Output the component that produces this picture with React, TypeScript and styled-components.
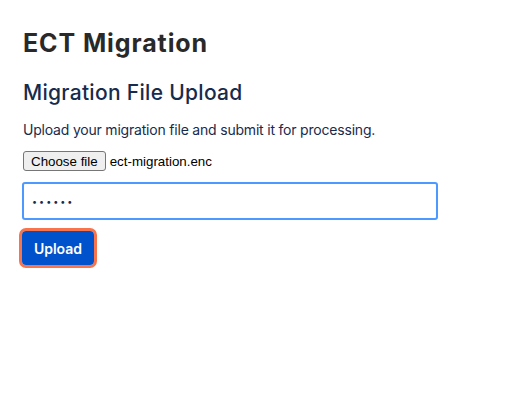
import React from "react";
import styled, { createGlobalStyle } from "styled-components";

const Global = createGlobalStyle`
  html, body { margin: 0; padding: 0; background: #ffffff; }
  body { font-family: Inter, "Noto Sans", sans-serif; }
`;

const Page = styled.main`
  padding: 28px 23px 0 23px;
  display: flex;
  flex-direction: column;
  align-items: flex-start;
`;

const Title = styled.h1`
  margin: 0;
  font-size: 25px;
  line-height: 30px;
  font-weight: 700;
  letter-spacing: 0.9px;
  color: #292929;
`;

const Subtitle = styled.h2`
  margin: 22px 0 0 0;
  font-size: 21px;
  line-height: 25px;
  font-weight: 500;
  letter-spacing: 0.3px;
  color: #172b4d;
`;

const Lead = styled.p`
  margin: 16px 0 0 0;
  font-size: 14px;
  line-height: 17px;
  letter-spacing: -0.2px;
  color: #172b4d;
`;

const FileRow = styled.div`
  margin-top: 13px;
  display: flex;
  align-items: center;
  gap: 4px;
  height: 20px;
`;

const ChooseButton = styled.button`
  box-sizing: border-box;
  height: 20px;
  padding: 0 7px;
  font-family: "Liberation Sans", Arial, sans-serif;
  font-size: 13.33px;
  color: #000;
  background: #efefef;
  border: 1px solid #767676;
  border-radius: 3px;
`;

const FileName = styled.span`
  font-family: "Liberation Sans", Arial, sans-serif;
  font-size: 13.33px;
  color: #000;
`;

const PasswordInput = styled.input`
  box-sizing: border-box;
  margin-top: 11px;
  margin-left: -1px;
  width: 416px;
  height: 38px;
  padding: 0 8px;
  border: 2px solid #4c9aff;
  border-radius: 3px;
  font-family: Inter, sans-serif;
  font-size: 9px;
  letter-spacing: 2px;
  color: #172b4d;
  outline: none;
`;

const Ring = styled.div`
  margin-top: 8px;
  margin-left: -4px;
  border: 3px solid #f7744d;
  border-radius: 7px;
  display: flex;
`;

const UploadButton = styled.button`
  box-sizing: border-box;
  width: 72px;
  height: 34px;
  border: none;
  border-radius: 4px;
  background: #0052cc;
  color: #ffffff;
  font-family: Inter, sans-serif;
  font-size: 14px;
  font-weight: 600;
  cursor: pointer;
`;

export default function App() {
  return (
    <>
      <Global />
      <Page>
        <Title>ECT Migration</Title>
        <Subtitle>Migration File Upload</Subtitle>
        <Lead>Upload your migration file and submit it for processing.</Lead>
        <FileRow>
          <ChooseButton type="button">Choose file</ChooseButton>
          <FileName>ect-migration.enc</FileName>
        </FileRow>
        <PasswordInput type="password" defaultValue="secret" readOnly />
        <Ring>
          <UploadButton type="button">Upload</UploadButton>
        </Ring>
      </Page>
    </>
  );
}
